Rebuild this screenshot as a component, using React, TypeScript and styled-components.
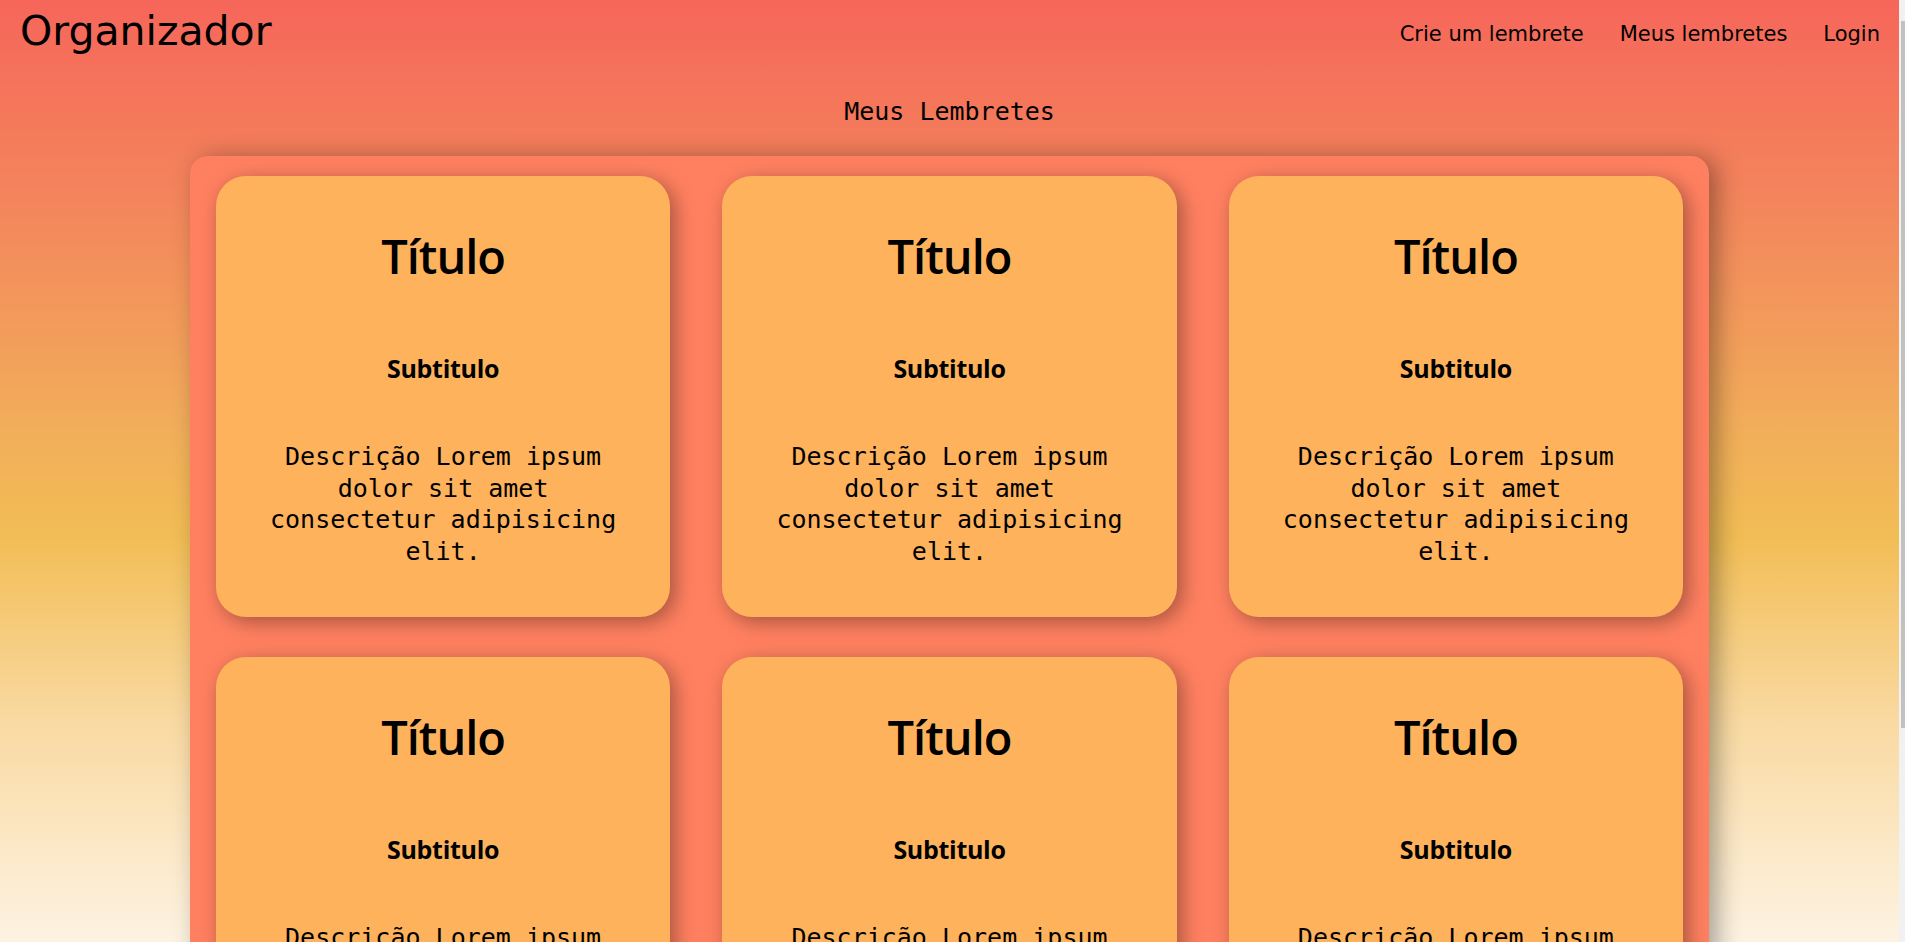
import React from "react";
import styled, { createGlobalStyle } from "styled-components";

const GlobalStyle = createGlobalStyle`
  html, body {
    margin: 0;
    padding: 0;
  }
  body {
    min-height: 100vh;
    padding-right: 6px;
    color: #000;
    font-family: "DejaVu Sans", Verdana, sans-serif;
    background: linear-gradient(
      180deg,
      #f6665a 0%,
      #f38b5c 25%,
      #f2ad5a 45%,
      #f2bd55 57%,
      #f9d9a0 76%,
      #fdf3e2 100%
    ) fixed;
  }
`;

const ScrollTrack = styled.div`
  position: fixed;
  top: 0;
  right: 0;
  bottom: 0;
  width: 6px;
  background: #f1f1f1;
  display: flex;
  flex-direction: column;
  align-items: flex-end;
  padding-top: 21px;
  box-sizing: border-box;
  z-index: 10;
`;

const ScrollThumb = styled.div`
  width: 4px;
  height: 707px;
  background: #c1c1c1;
`;

const Header = styled.header`
  display: flex;
  justify-content: space-between;
  align-items: flex-start;
  height: 64px;
  padding: 0 19px 0 20px;
`;

const Logo = styled.h1`
  margin: 7px 0 0;
  font-family: "DejaVu Sans", Verdana, sans-serif;
  font-size: 41px;
  line-height: 48px;
  font-weight: 400;
`;

const Nav = styled.nav`
  display: flex;
  gap: 36px;
  margin-top: 22px;
`;

const NavLink = styled.a`
  font-family: "DejaVu Sans", Verdana, sans-serif;
  font-size: 21px;
  line-height: 25px;
  color: #000;
  text-decoration: none;
`;

const PageTitle = styled.h2`
  margin: 33px 0 29px;
  text-align: center;
  font-family: "DejaVu Sans Mono", monospace;
  font-size: 25px;
  line-height: 30px;
  font-weight: 400;
`;

const Panel = styled.main`
  width: 80%;
  margin: 0 auto 90px;
  background: #ff8060;
  border-radius: 18px;
  box-shadow: 8px 2px 25px rgba(0, 0, 0, 0.35);
  display: flex;
  flex-wrap: wrap;
  justify-content: space-around;
`;

const Card = styled.article`
  width: 29.9%;
  margin: 20px 0;
  box-sizing: border-box;
  padding: 51px 40px 49px;
  background: #feb25c;
  border-radius: 30px;
  box-shadow: 5px 5px 20px rgba(0, 0, 0, 0.35);
  text-align: center;
`;

const CardTitle = styled.h3`
  margin: 0;
  font-family: "Open Sans", "Noto Sans", sans-serif;
  font-size: 47px;
  line-height: 58px;
  font-weight: 600;
  letter-spacing: -1px;
`;

const CardSubtitle = styled.h4`
  margin: 68px 0 0;
  font-family: "Open Sans", "Noto Sans", sans-serif;
  font-size: 25px;
  line-height: 30px;
  font-weight: 700;
  letter-spacing: -0.3px;
`;

const CardText = styled.p`
  margin: 58px 0 0;
  font-family: "DejaVu Sans Mono", monospace;
  font-size: 25px;
  line-height: 31.7px;
`;

const reminders = Array.from({ length: 6 }, (_, i) => ({
  id: i,
  title: "Título",
  subtitle: "Subtitulo",
  text: "Descrição Lorem ipsum dolor sit amet consectetur adipisicing elit.",
}));

export default function App() {
  return (
    <>
      <GlobalStyle />
      <Header>
        <Logo>Organizador</Logo>
        <Nav>
          <NavLink href="#">Crie um lembrete</NavLink>
          <NavLink href="#">Meus lembretes</NavLink>
          <NavLink href="#">Login</NavLink>
        </Nav>
      </Header>
      <PageTitle>Meus Lembretes</PageTitle>
      <Panel>
        {reminders.map((r) => (
          <Card key={r.id}>
            <CardTitle>{r.title}</CardTitle>
            <CardSubtitle>{r.subtitle}</CardSubtitle>
            <CardText>{r.text}</CardText>
          </Card>
        ))}
      </Panel>
      <ScrollTrack aria-hidden>
        <ScrollThumb />
      </ScrollTrack>
    </>
  );
}
